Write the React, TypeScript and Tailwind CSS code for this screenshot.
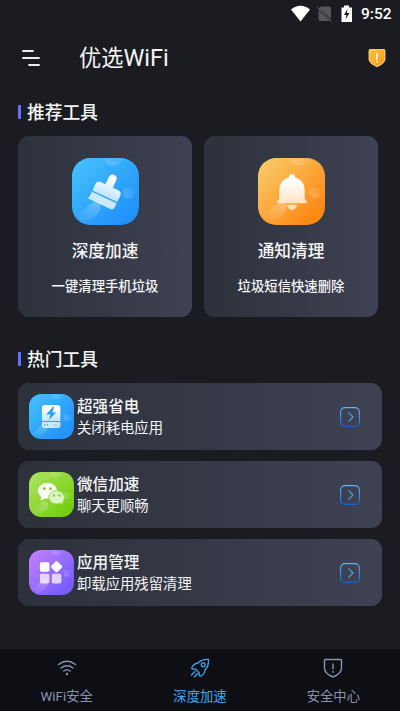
import React from "react";

const font = "font-['Roboto','Noto_Sans_CJK_SC',sans-serif]";

function Tile({ id, from, to, className, children }: { id: string; from: string; to: string; className: string; children: React.ReactNode }) {
  return (
    <svg viewBox="0 0 66 66" className={className}>
      <defs>
        <linearGradient id={id} x1="0" y1="0" x2="1" y2="1">
          <stop offset="0.1" stopColor={from} />
          <stop offset="0.85" stopColor={to} />
        </linearGradient>
        <linearGradient id={id + "s"} x1="0" y1="0" x2="0" y2="1">
          <stop offset="0.2" stopColor="#fff" />
          <stop offset="1" stopColor="#fff" stopOpacity="0.7" />
        </linearGradient>
        <linearGradient id={id + "h"} x1="1" y1="0" x2="0" y2="1">
          <stop offset="0" stopColor="#fff" stopOpacity="0.28" />
          <stop offset="1" stopColor="#fff" stopOpacity="0" />
        </linearGradient>
        <linearGradient id={id + "d"} x1="0" y1="1" x2="1" y2="0">
          <stop offset="0" stopColor="#fff" stopOpacity="0.22" />
          <stop offset="1" stopColor="#fff" stopOpacity="0.02" />
        </linearGradient>
      </defs>
      <rect width="66" height="66" rx="18" fill={`url(#${id})`} />
      <path d="M33 0H52L46 6Q40 9 35 6Q31 3 33 0Z" fill={`url(#${id}d)`} />
      <path d="M5 58L18 45Q24 41 28 46Q29 51 25 55L18 61Q10 63 5 58Z" fill={`url(#${id}h)`} />
      <circle cx="56" cy="34" r="5.500" fill={`url(#${id}d)`} />
      {children}
    </svg>
  );
}

function BrushIcon() {
  return (
    <Tile id="brush" from="#43bdfb" to="#2193fb" className="h-[67px] w-[67px]">
      <g transform="translate(34 33) rotate(25)">
        <path d="M-4 -6V-14Q-4 -18 0 -18Q4 -18 4 -14V-6H10Q14 -6 14 -2V5H-13V-2Q-13 -6 -9 -6Z" fill="url(#brushs)" />
        <path d="M-13 6.300H14V10Q14 14 10 14H-14Q-12.500 11 -13 6.300Z" fill="#fff" opacity="0.75" />
      </g>
    </Tile>
  );
}

function BellIcon() {
  return (
    <Tile id="bell" from="#f9c764" to="#fd8915" className="h-[67px] w-[67px]">
      <path d="M28.500 46H38.500Q37.500 51 33.500 51Q29.500 51 28.500 46Z" fill="#fff" opacity="0.7" />
      <path d="M30.500 19Q30.500 16 33.500 16Q36.500 16 36.500 19Q46 22 46 32V40L48 42.500Q48.500 44.500 46.500 44.500H20.500Q18.500 44.500 19 42.500L21 40V32Q21 22 30.500 19Z" fill="url(#bells)" />
    </Tile>
  );
}

function PowerIcon() {
  return (
    <Tile id="power" from="#43bdfb" to="#2193fb" className="h-[45px] w-[45px] shrink-0">
      <path d="M19 20Q19 16 23 16H42Q46 16 46 20V39.500H19Z" fill="url(#powers)" />
      <path d="M19 41H46V46Q46 50 42 50H23Q19 50 19 46Z" fill="#fff" opacity="0.75" />
      <path d="M35 19L25 30H31.500L29 38L40 27H34L37 19Z" fill="#2b9ff9" />
      <path d="M22 45.500H24M26 45.500H28" stroke="#3ba5f8" strokeWidth="2" />
      <path d="M36 45.500H43" stroke="#8fcdfb" strokeWidth="1.500" />
    </Tile>
  );
}

function ChatIcon() {
  return (
    <Tile id="chat" from="#a9e05c" to="#75cf10" className="h-[45px] w-[45px] shrink-0">
      <path d="M27 16C19 16 13 21.500 13 28Q13 33 18 37L17 42L23 39H28C36 39 41 34 41 28C41 21 35 16 27 16Z" fill="#fff" opacity="0.95" />
      <path d="M40.500 27.500C34 27.500 29 32 29 37.500C29 43 34 47 41 47L46 46L49.500 48V44Q52 41.500 52 37.500C52 32 47 27.500 40.500 27.500Z" fill="#dcf4c0" stroke="#8dd43b" strokeWidth="1.200" />
      <circle cx="22.500" cy="24.500" r="2" fill="#7cc92b" />
      <circle cx="31.500" cy="24.500" r="2" fill="#7cc92b" />
      <circle cx="36.500" cy="34.500" r="1.700" fill="#7cc92b" />
      <circle cx="44.500" cy="34.500" r="1.700" fill="#7cc92b" />
    </Tile>
  );
}

function AppsIcon() {
  return (
    <Tile id="apps" from="#bb7efc" to="#785cfc" className="h-[45px] w-[45px] shrink-0">
      <rect x="16" y="18" width="14" height="14" rx="2.500" fill="#fff" />
      <rect x="34" y="18" width="13" height="13" rx="2.500" fill="#fff" opacity="0.95" transform="rotate(45 40.500 24.500)" />
      <rect x="16" y="35" width="14" height="14" rx="2.500" fill="#fff" opacity="0.72" />
      <rect x="33.500" y="35" width="14" height="14" rx="2.500" fill="#fff" opacity="0.72" />
    </Tile>
  );
}

function Heading({ children }: { children: React.ReactNode }) {
  return (
    <h2 className="flex h-6 items-center gap-[6px] pl-[18px] text-[17.75px] font-medium text-[#f6f6f8]">
      <span className="h-[14px] w-[3px] rounded-[1px] bg-[#6270ff]" />
      <span className="pt-[2px]">{children}</span>
    </h2>
  );
}

function ToolCard({ icon, title, note }: { icon: React.ReactNode; title: string; note: string }) {
  return (
    <div className="flex h-[181px] w-[174px] flex-col items-center rounded-[11px] bg-linear-to-r from-[#2d313b] to-[#3e4253] pt-[22px]">
      {icon}
      <div className="mt-[15px] text-[16.7px] leading-6 font-medium">{title}</div>
      <div className="mt-[13px] text-[13.35px] leading-5 font-medium">{note}</div>
    </div>
  );
}

function ToolRow({ icon, title, note, id }: { icon: React.ReactNode; title: string; note: string; id: string }) {
  return (
    <div className="flex h-[67px] items-center rounded-[11px] bg-linear-to-r from-[#2d313b] to-[#3e4253] pr-[22px] pl-[11px]">
      {icon}
      <div className="ml-[3px] grow pt-[3px]">
        <div className="text-[15.6px] leading-[22px] font-medium">{title}</div>
        <div className="text-[14.35px] leading-[22px]">{note}</div>
      </div>
      <svg viewBox="0 0 20 20" className="h-5 w-5" fill="none">
        <defs>
          <linearGradient id={id} x1="0" y1="0" x2="0" y2="20" gradientUnits="userSpaceOnUse">
            <stop stopColor="#62b8f2" />
            <stop offset="1" stopColor="#0b63cf" />
          </linearGradient>
        </defs>
        <rect x="0.600" y="0.600" width="18.800" height="18.800" rx="4.500" stroke={`url(#${id})`} strokeWidth="1.200" />
        <path d="M8.500 5.500L13 10L8.500 14.500" stroke="#4a9fe2" strokeWidth="1.200" />
      </svg>
    </div>
  );
}

export default function App() {
  return (
    <div className={`flex h-[711px] w-[400px] flex-col overflow-hidden bg-[#1b1c21] text-[#f4f5f7] ${font}`}>
      <div className="flex h-[27px] items-center justify-end pr-[9px]">
        <svg viewBox="0 0 63 20" className="mr-[8px] h-5 w-[63px]">
          <path d="M1 5.500Q10.500 -2 20 5.500L10.500 17.500Z" fill="#fff" />
          <path d="M31 2.500H39Q41 2.500 41 4.500V15L29 4.500ZM28.500 6L40 17H30.500Q28.500 17 28.500 15Z" fill="#55565a" />
          <path d="M27 3L41.500 17.500" stroke="#65666a" strokeWidth="1" />
          <path d="M54 1.500H59V3.500H62V18H51.500V3.500H54Z" fill="#fff" />
          <path d="M57.500 5L54 11H56.500L55.500 15.500L59.500 9H57Z" fill="#1b1c21" />
        </svg>
        <span className="w-[30px] text-[15.5px] leading-5 font-medium text-white">9:52</span>
      </div>
      <header className="flex h-[62px] items-center pr-[14px] pl-[22px]">
        <svg viewBox="0 0 18 18" className="h-[18px] w-[18px]" stroke="#eee" strokeWidth="1.800" strokeLinecap="round">
          <path d="M1 2H11M1 9H17M7 16H17" />
        </svg>
        <h1 className="ml-[39px] grow text-[22.2px] leading-8">
          优选<span className="text-[23.500px]">WiFi</span>
        </h1>
        <svg viewBox="0 0 18 20" className="h-5 w-[18px]">
          <defs>
            <linearGradient id="badge" x1="0" y1="0" x2="1" y2="1">
              <stop stopColor="#fdc52d" />
              <stop offset="1" stopColor="#f79824" />
            </linearGradient>
          </defs>
          <path d="M1 2.500Q1 1.500 2 1.500H16Q17 1.500 17 2.500V12Q16 16 9 18.800Q2 16 1 12Z" fill="url(#badge)" stroke="#ffe5a8" strokeWidth="0.800" />
          <path d="M9 5V11.500M9 12.800V14.600" stroke="#fff" strokeWidth="1.600" />
        </svg>
      </header>
      <main className="grow pt-[11px]">
        <Heading>推荐工具</Heading>
        <section className="mt-3 flex gap-3 pl-[18px]">
          <ToolCard icon={<BrushIcon />} title="深度加速" note="一键清理手机垃圾" />
          <ToolCard icon={<BellIcon />} title="通知清理" note="垃圾短信快速删除" />
        </section>
        <div className="mt-[30px]">
          <Heading>热门工具</Heading>
        </div>
        <section className="mt-3 flex flex-col gap-[11px] px-[18px]">
          <ToolRow id="go1" icon={<PowerIcon />} title="超强省电" note="关闭耗电应用" />
          <ToolRow id="go2" icon={<ChatIcon />} title="微信加速" note="聊天更顺畅" />
          <ToolRow id="go3" icon={<AppsIcon />} title="应用管理" note="卸载应用残留清理" />
        </section>
      </main>
      <nav className="grid h-[62px] shrink-0 grid-cols-3 bg-[#0e0f14] text-[13.35px] leading-5 text-[#8992ae]">
        <div className="flex flex-col items-center gap-[9px] pt-[9px]">
          <svg viewBox="0 0 20 20" className="h-5 w-5" fill="none" stroke="currentColor" strokeWidth="1.400" strokeLinecap="round">
            <path d="M1.500 6.500Q10 0 18.500 6.500M4 10Q10 5.500 16 10M6.800 13Q10 10.800 13.200 13" />
            <circle cx="10" cy="16" r="1.200" fill="currentColor" stroke="none" />
          </svg>
          <span>WiFi安全</span>
        </div>
        <div className="flex flex-col items-center gap-[9px] pt-[9px] text-[#3aa6f2]">
          <svg viewBox="0 0 20 20" className="h-5 w-5" fill="none" stroke="currentColor" strokeWidth="1.300" strokeLinecap="round" strokeLinejoin="round">
            <path d="M18.500 1.500Q12 1 8 5Q4 5.500 1.800 9.500Q1.500 11.500 5.500 11L9.200 14.600Q8.800 18.500 10.800 18Q15 16 15 12Q19 8 18.500 1.500ZM5 13.500L1.500 17M7.500 15.500L4.500 18.800" />
            <circle cx="13.200" cy="6.800" r="1.900" />
          </svg>
          <span>深度加速</span>
        </div>
        <div className="flex flex-col items-center gap-[9px] pt-[9px]">
          <svg viewBox="0 0 20 20" className="h-5 w-5" fill="none" stroke="currentColor" strokeWidth="1.400">
            <path d="M2 1.500H18Q18.500 1.500 18.500 2.500V10C18.500 14 15 17 10 19C5 17 1.500 14 1.500 10V2.500Q1.500 1.500 2 1.500ZM10 5.500V11.500M10 13V14.800" />
          </svg>
          <span>安全中心</span>
        </div>
      </nav>
    </div>
  );
}
